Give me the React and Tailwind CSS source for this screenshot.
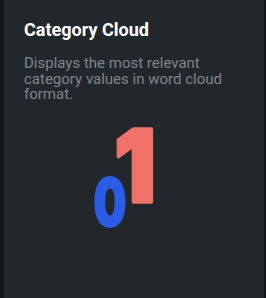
import React from 'react'

function App() {
  return (
    <div className="w-[266px] h-[298px] bg-[#111716] flex">
      <div className="ml-[4px] w-[260px] h-full bg-[#22272b] flex flex-col px-[20px] pt-[18px]">
        {/* Header */}
        <h2 className="text-[18px] leading-[24px] font-bold text-white font-['Roboto',sans-serif]">Category Cloud</h2>
        <p className="mt-[14px] text-[15px] leading-[15.5px] text-[#7f858a] font-['Roboto',sans-serif]">
          Displays the most relevant category values in word cloud format.
        </p>

        {/* Word cloud */}
        <svg className="mt-[-5px] overflow-visible" width="220" height="150" viewBox="0 0 220 150">
          <text transform="translate(111 104) scale(0.92 1)" textAnchor="middle" fontSize="100" fontWeight="900"
            fill="#f07167" stroke="#f07167" strokeWidth="3.5" strokeLinejoin="round"
            fontFamily="Inter, sans-serif">1</text>
          <text transform="translate(86 128) scale(0.7 1)" textAnchor="middle" fontSize="66" fontWeight="900"
            fill="#2b5ce6" stroke="#2b5ce6" strokeWidth="2" strokeLinejoin="round"
            fontFamily="Inter, sans-serif">0</text>
        </svg>
      </div>
    </div>
  )
}

export default App
